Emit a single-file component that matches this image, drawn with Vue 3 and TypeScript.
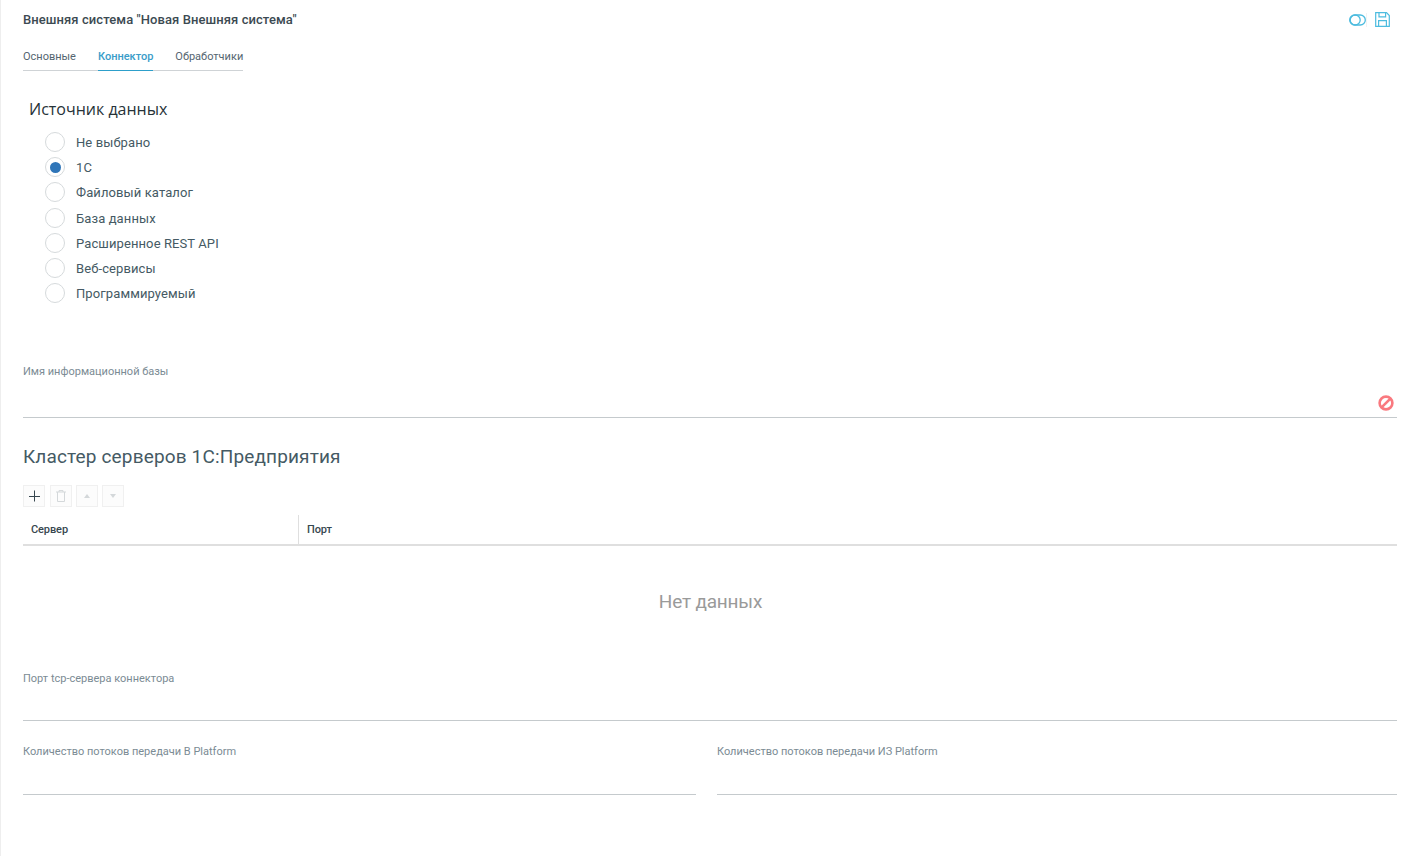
<script setup lang="ts">
const sources: string[] = ['Не выбрано', '1С', 'Файловый каталог', 'База данных', 'Расширенное REST API', 'Веб-сервисы', 'Программируемый']
const selected = '1С'
const tabs = [
  { label: 'Основные', active: false },
  { label: 'Коннектор', active: true },
  { label: 'Обработчики', active: false },
]
</script>

<template>
  <div class="page">
    <header class="top">
      <h1 class="title">Внешняя система "Новая Внешняя система"</h1>
      <div class="actions">
        <svg class="toggle" width="17" height="12" viewBox="0 0 17 12" fill="none" stroke="#4dbcdf" stroke-width="1.3">
          <rect x="0.7" y="1" width="15.6" height="10" rx="5" />
          <circle cx="6.2" cy="6" r="5" />
        </svg>
        <span class="sep"></span>
        <svg width="15" height="15" viewBox="0 0 15 15" fill="none" stroke="#4dbcdf" stroke-width="1.2">
          <path d="M.7.7h10.8l2.8 2.8v10.8H.7z" />
          <path d="M4 .7v4.2h6.6V.7M3.6 14.3V8.6h7.8v5.7" />
        </svg>
      </div>
    </header>

    <nav class="tabs">
      <span v-for="t in tabs" :key="t.label" class="tab" :class="{ active: t.active }">{{ t.label }}</span>
    </nav>

    <h2 class="source-title">Источник данных</h2>
    <div class="radios">
      <label v-for="s in sources" :key="s" class="radio">
        <span class="circle"><span v-if="s === selected" class="dot"></span></span>
        <span class="radio-text">{{ s }}</span>
      </label>
    </div>

    <div class="field base">
      <span class="label">Имя информационной базы</span>
      <svg class="ban" width="16" height="16" viewBox="0 0 16 16" fill="none" stroke="#f9797f" stroke-width="2.6">
        <circle cx="8" cy="8" r="6.4" />
        <path d="M3.6 12.4 12.4 3.6" />
      </svg>
    </div>

    <h2 class="cluster">Кластер серверов 1С:Предприятия</h2>

    <div class="toolbar">
      <button class="tool first">
        <svg width="12" height="12" viewBox="0 0 12 12" stroke="#37474f" stroke-width="1"><path d="M6.5 0.5v11M1 6.5h11" /></svg>
      </button>
      <button class="tool">
        <svg width="10" height="12" viewBox="0 0 10 12" fill="none" stroke="#d4d8da" stroke-width="1"><path d="M0 2h10M3 2V.6h4V2M1.5 2v9.5h7V2" /></svg>
      </button>
      <button class="tool">
        <svg width="6" height="4" viewBox="0 0 6 4" fill="#d4d8da"><path d="M3 0l3 4H0z" /></svg>
      </button>
      <button class="tool">
        <svg width="6" height="4" viewBox="0 0 6 4" fill="#d4d8da"><path d="M0 0h6L3 4z" /></svg>
      </button>
    </div>

    <div class="thead">
      <div class="th server">Сервер</div>
      <div class="th">Порт</div>
    </div>
    <div class="empty">Нет данных</div>

    <div class="field port">
      <span class="label">Порт tcp-сервера коннектора</span>
    </div>

    <div class="pair">
      <div class="field half"><span class="label">Количество потоков передачи В Platform</span></div>
      <div class="field half"><span class="label">Количество потоков передачи ИЗ Platform</span></div>
    </div>
  </div>
</template>

<style>
html, body { margin: 0; background: #fff; overflow: hidden; }
</style>

<style scoped>
.page {
  box-sizing: border-box;
  height: 856px;
  padding: 0 17px 0 22px;
  border-left: 1px solid #eeeeee;
  font-family: Roboto, "Noto Sans", sans-serif;
  color: #37474f;
  overflow: hidden;
}
.top { display: flex; justify-content: space-between; align-items: center; height: 39px; }
.title { margin: 0; font-size: 13px; font-weight: 500; color: #3c4a52; letter-spacing: 0.08px; }
.actions { display: flex; align-items: center; gap: 8px; padding-right: 7px; }
.toggle { margin-right: -8px; }
.sep { width: 1px; height: 14px; background: #f2f2f2; }
.tabs { display: inline-flex; gap: 22px; height: 32px; border-bottom: 1px solid #cfd3d6; box-sizing: border-box; vertical-align: top; }
.tab { font-size: 11px; line-height: 35px; height: 32px; color: #546570; box-sizing: border-box; }
.tab.active { color: #3a9dc9; font-weight: 500; border-bottom: 1px solid #2d9fca; }
.source-title { margin: 27px 0 0 6px; font-family: "Open Sans", sans-serif; font-size: 16px; line-height: 22px; font-weight: 500; color: #263238; }
.radios { margin: 10px 0 0 22px; display: flex; flex-direction: column; }
.radio { display: flex; align-items: center; height: 25.17px; }
.circle { box-sizing: border-box; width: 20px; height: 20px; margin-bottom: 1px; border: 1px solid #d6dadc; border-radius: 50%; display: flex; align-items: center; justify-content: center; }
.dot { width: 11px; height: 11px; border-radius: 50%; background: #2f75b8; }
.radio-text { margin-left: 11px; font-size: 13px; letter-spacing: 0.1px; color: #455a64; }
.field { position: relative; box-sizing: border-box; border-bottom: 1px solid #c5cacd; }
.label { display: block; font-size: 11px; line-height: 14px; color: #7b8b94; }
.base { margin-top: 59px; height: 53px; }
.ban { position: absolute; right: 3px; bottom: 6px; }
.cluster { margin: 26px 0 0; font-size: 19px; line-height: 26px; font-weight: 400; color: #455a64; letter-spacing: 0.15px; }
.toolbar { display: flex; gap: 4px; margin-top: 15px; }
.tool { box-sizing: border-box; width: 22px; height: 22px; padding: 0; display: flex; align-items: center; justify-content: center; background: #fcfcfc; border: 1px solid #f0f0f0; }
.tool.first { margin-right: 1px; }
.thead { display: flex; margin-top: 8px; height: 31px; box-sizing: border-box; border-bottom: 2px solid #dfdfdf; }
.th { font-size: 11px; font-weight: 500; line-height: 29px; padding-left: 8px; color: #37474f; letter-spacing: -0.1px; }
.th.server { box-sizing: border-box; width: 276px; border-right: 1px solid #dfdfdf; }
.empty { box-sizing: border-box; height: 113px; padding-bottom: 2px; display: flex; align-items: center; justify-content: center; font-size: 19px; letter-spacing: -0.2px; color: #9a9a9a; padding-left: 1px; }
.port { margin-top: 13px; height: 49px; }
.pair { display: flex; gap: 21px; margin-top: 24px; }
.half { height: 50px; }
.half:first-child { width: 673px; }
.half:last-child { flex: 1; }
</style>
